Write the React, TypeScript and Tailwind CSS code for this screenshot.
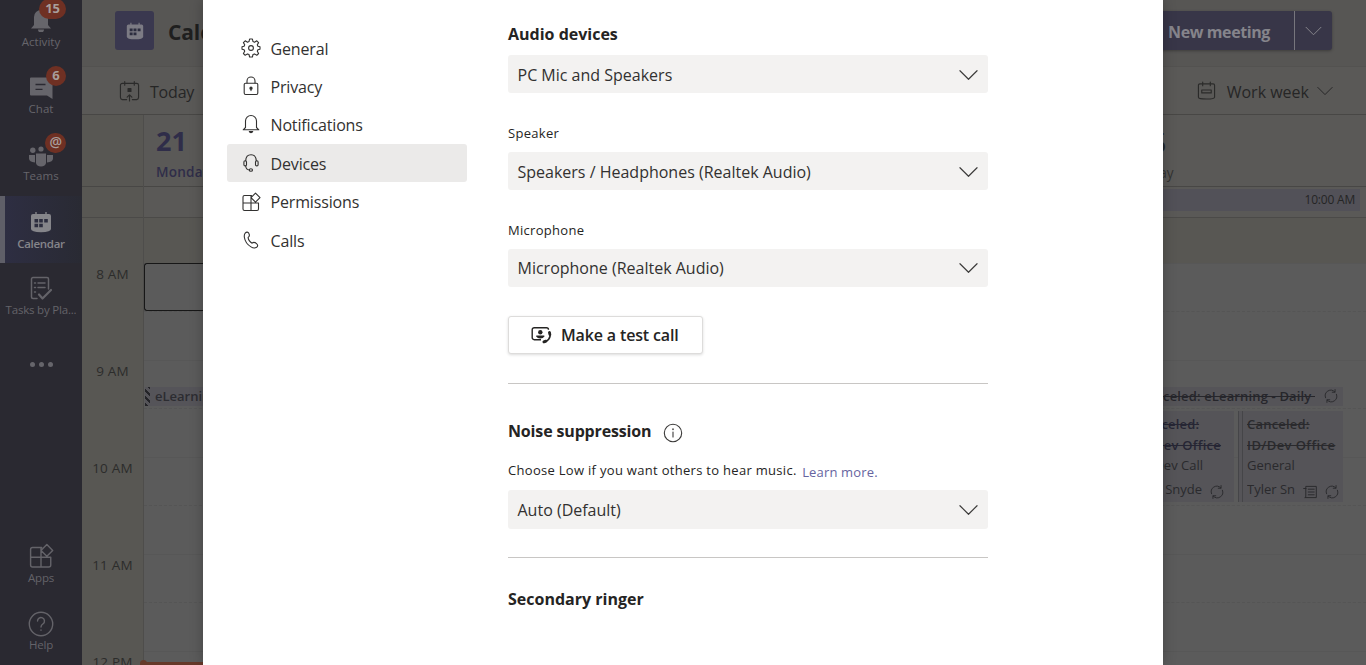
import type { ReactNode } from "react";

type IconProps = { className?: string; children?: ReactNode; box?: string; sw?: number };

function Line({ className = "", children, box = "0 0 20 20", sw = 1.1 }: IconProps) {
  return (
    <svg viewBox={box} className={className} fill="none" stroke="currentColor" strokeWidth={sw} strokeLinecap="round" strokeLinejoin="round">
      {children}
    </svg>
  );
}

const Chevron = ({ className = "" }: { className?: string }) => (
  <Line box="0 0 20 12" className={className} sw={1.2}>
    <path d="M1 1.5 10 10.5 19 1.5" />
  </Line>
);

const Gear = () => (
  <Line className="h-5 w-5">
    <circle cx="10" cy="10" r="2.4" />
    <path d="M8.6 1 H11.4 L12 3.6 L13.5 4.2 L15.8 2.8 L17.6 4.6 L16.3 6.8 L16.9 8.2 L19 8.7 V11.3 L16.9 11.8 L16.3 13.3 L17.6 15.5 L15.8 17.3 L13.5 15.9 L12 16.5 L11.4 19 H8.6 L8 16.5 L6.5 15.9 L4.2 17.3 L2.4 15.5 L3.7 13.3 L3.1 11.8 L1 11.3 V8.7 L3.1 8.2 L3.7 6.8 L2.4 4.6 L4.2 2.8 L6.5 4.2 L8 3.6 Z" />
  </Line>
);
const Lock = () => (
  <Line className="h-5 w-5">
    <rect x="3.2" y="7.2" width="13.6" height="11.3" rx="1.4" />
    <path d="M6 7V5a4 4 0 0 1 8 0v2M10 12.6v2" />
    <circle cx="10" cy="12.2" r="1.1" fill="currentColor" />
  </Line>
);
const Bell = () => (
  <Line className="-mt-px h-5 w-5">
    <path d="M4.500 13.500V7a5.500 5.500 0 0 1 11 0v6.500l2.300 2.300H2.200zM8.300 17.600a1.800 1.500 0 0 0 3.400 0z" />
  </Line>
);
const Headset = () => (
  <Line className="h-5 w-5">
    <path d="M4.700 7.700C4.900 4 7 1.800 10 1.800s5.100 2.200 5.300 5.900M4.700 13c.2 2.400 1.300 3.800 3.700 4" />
    <rect x="2.900" y="7.700" width="2.600" height="5.200" rx="1.200" />
    <rect x="14.500" y="7.700" width="2.600" height="5.200" rx="1.200" />
    <ellipse cx="9.900" cy="17" rx="1.600" ry="1.300" />
  </Line>
);
const AppsIcon = ({ className = "h-5 w-5" }: { className?: string }) => (
  <Line className={className}>
    <path d="M10.500 3.500H3.500A1.500 1.500 0 0 0 2 5v12a1.500 1.500 0 0 0 1.500 1.500H16a1.500 1.500 0 0 0 1.500-1.500v-6H2M10 3.500v15M14.500 1.200 19 5.700l-4.500 4.500L10 5.700z" />
  </Line>
);
const Phone = () => (
  <Line className="h-5 w-5">
    <path d="M4.200 3.100C5.500 1.700 7.100 1.900 7.800 3.300c.8 1.500 1.100 3-.7 4.100 .2 2.200 1.800 4.600 4 5.800 1.500-1.300 3-.8 4.400.4 1.600 1.400 1.500 2.700.1 3.700-1.500 1-3.600.9-5.600-.4C6.600 14.800 4 11.300 3.400 7.500 3.100 5.700 3.300 4.100 4.200 3.100z" />
  </Line>
);
const Recur = ({ className = "" }: { className?: string }) => (
  <Line className={`h-[14px] w-[14px] shrink-0 text-[#2b2b2e] ${className}`} sw={1.4}>
    <path d="M2.200 12.500A8 8 0 0 1 15.500 4.200M17.800 7.500A8 8 0 0 1 4.500 15.800M15.800.8v3.800h-4M4.200 19.200v-3.800h4" />
  </Line>
);

const CalSolid = ({ className = "" }: { className?: string }) => (
  <svg viewBox="0 0 22 22" className={className}>
    <path d="M6 1v3M16 1v3" stroke="currentColor" strokeWidth="1.400" />
    <path d="M1 5a2 2 0 0 1 2-2h16a2 2 0 0 1 2 2v13q0 3-10 3.200Q1 21 1 18z" fill="currentColor" />
    <g className="fill-[#2c2d3f]">
      <path d="M9.200 8h3.600v3.400H9.200zM14.200 8h3.600v3.400h-3.600zM4.500 8h3.600v3.400H4.500zM4.500 12.800h3.600v3.400H4.500zM9.200 12.800h3.600v3.400H9.200z" />
    </g>
  </svg>
);

function RailItem({ label, icon, badge, active, dim }: { label: string; icon: ReactNode; badge?: string; active?: boolean; dim?: boolean }) {
  return (
    <div className={`relative flex h-[67px] w-full shrink-0 flex-col items-center pt-[13px] ${active ? "bg-gradient-to-r from-[#2e2e43] to-[#292a33] text-[#85858a]" : dim ? "text-[#646369]" : "text-[#66656b]"}`}>
      {active && <span className="absolute inset-y-0 left-0 w-[5px] bg-[#5f5f68]" />}
      <div className="flex h-[26px] items-center justify-center">{icon}</div>
      <div className={`whitespace-nowrap text-[11.500px] leading-[15px] ${active ? "mt-px font-semibold tracking-[-0.300px]" : dim ? "tracking-[-0.200px]" : "tracking-[0.050px]"}`}>{label}</div>
      {badge && (
        <span className="absolute right-[16px] top-[4px] flex h-[20px] min-w-[20px] items-center justify-center rounded-full bg-[#6f3023] px-[4px] text-[13px] font-bold text-[#a89e9b]">
          {badge === "@" ? <span className="-mt-[3px] text-[14px] font-semibold">@</span> : <span className={badge.length > 1 ? "px-[2px]" : ""}>{badge}</span>}
        </span>
      )}
    </div>
  );
}

function Rail() {
  return (
    <nav className="flex h-full w-[82px] shrink-0 flex-col bg-[#2a2931]">
      <div className="-mt-[5px] flex flex-col">
        <RailItem
          label="Activity"
          badge="15"
          icon={
            <svg viewBox="0 0 22 24" className="-mt-[3px] h-6 w-[22px]" fill="currentColor">
              <path d="M4 17V9a7 7 0 0 1 14 0v8l3 3.500H1zM8 21.500h6a3 3 0 0 1-6 0z" />
            </svg>
          }
        />
        <RailItem
          label="Chat"
          badge="6"
          icon={
            <svg viewBox="0 0 24 24" className="h-6 w-6">
              <path d="M1 2.500a1 1 0 0 1 1-1h20.500a1 1 0 0 1 1 1V23L18 19.500H2a1 1 0 0 1-1-1z" fill="currentColor" />
              <path d="M6.500 8.500h10M6.500 13.300h7" className="stroke-[#2a2931]" strokeWidth="1.300" />
            </svg>
          }
        />
        <RailItem
          label="Teams"
          badge="@"
          icon={
            <svg viewBox="0 0 24 24" className="mt-[2px] h-6 w-6" fill="currentColor">
              <circle cx="3.800" cy="6.300" r="2.700" />
              <circle cx="12" cy="5" r="2.600" />
              <path d="M7 9.500h10v9.500a5 3.500 0 0 1-10 0zM0 11h6v7.500q-6-.5-6-4zM18 11h6v3.500q0 3.500-6 4z" />
            </svg>
          }
        />
        <RailItem label="Calendar" active icon={<CalSolid className="h-[22px] w-[22px]" />} />
        <RailItem
          label="Tasks by Pla..."
          dim
          icon={
            <Line box="0 0 22 24" className="-mt-[2px] h-6 w-[22px]" sw={1.500}>
              <path d="M7 22.500H3A1.500 1.500 0 0 1 1.500 21V3A1.500 1.500 0 0 1 3 1.500h14A1.500 1.500 0 0 1 18.500 3v10M4.500 7h1M8 7h7M4.500 11.500h1M8 11.500h7M4.500 16h1" />
              <path d="m9 18.500 3.500 4 8.500-8.500" strokeWidth="2.200" />
            </Line>
          }
        />
      </div>
      <div className="mt-[32px] flex justify-center gap-[4px]">
        <span className="h-[5px] w-[5px] rounded-full bg-[#66656b]" />
        <span className="h-[5px] w-[5px] rounded-full bg-[#66656b]" />
        <span className="h-[5px] w-[5px] rounded-full bg-[#66656b]" />
      </div>
      <div className="mt-auto flex flex-col">
        <RailItem dim label="Apps" icon={<AppsIcon className="-mt-[2px] h-[26px] w-[26px]" />} />
        <RailItem
          dim
          label="Help"
          icon={
            <Line box="0 0 24 24" className="-mt-px h-[26px] w-[26px]" sw={1.300}>
              <circle cx="12" cy="12" r="10.800" />
              <path d="M8.800 9.300a3.200 3.200 0 1 1 5.200 2.400c-1.300 1-2 1.500-2 3M12 17.500v.3" />
            </Line>
          }
        />
      </div>
    </nav>
  );
}

function TopBar() {
  return (
    <header className="flex h-[67px] shrink-0 items-start border-b border-[#535250] bg-[#575654] pl-[33px] pr-[34px] pt-[11px]">
      <div className="flex h-[39px] w-[39px] items-center justify-center rounded-[3px] bg-[#3a384f] text-[#7c7b84]">
        <CalSolid className="h-[18px] w-[18px]" />
      </div>
      <h1 className="ml-[14px] text-[21px] font-bold leading-[42px] tracking-[-0.100px] text-[#1f1f1f]">Calendar</h1>
      <div className="ml-auto flex h-[39px] rounded-[3px] bg-[#383648] text-[#85848b] shadow-[0_1px_3px_rgba(0,0,0,0.3)]">
        <div className="w-[150px] pr-[24px] text-right text-[16px] font-bold leading-[42px] tracking-[-0.400px]">New meeting</div>
        <div className="flex w-[38px] items-center justify-center border-l border-[#77767d]">
          <Chevron className="h-[10px] w-[17px]" />
        </div>
      </div>
    </header>
  );
}

function Toolbar() {
  return (
    <div className="flex h-[48px] shrink-0 items-center border-b border-[#484745] bg-[#5a5957] pl-[37px] pr-[33px] text-[#262626]">
      <Line box="0 0 22 22" className="h-[22px] w-[21px] text-[#2b2b2a]" sw={1.200}>
        <path d="M8 20H3.500A2.500 2.500 0 0 1 1.500 17.500V5a2 2 0 0 1 2-2h15a2 2 0 0 1 2 2v12.500a2.500 2.500 0 0 1-2 2.500H14M6 1v4M16 1v4M11 21.500v-6M8.500 17.500l2.500-2.500 2.500 2.500" />
        <path d="M9.500 8.500h3v3h-3z" fill="currentColor" />
      </Line>
      <span className="ml-[10px] mt-[2px] text-[16px] tracking-[-0.200px]">Today</span>
      <Line box="0 0 20 20" className="ml-auto h-[19px] w-[19px] text-[#2b2b2a]" sw={1.200}>
        <path d="M1.500 4.500a1.500 1.500 0 0 1 1.500-1.500h14a1.500 1.500 0 0 1 1.500 1.500V17q0 2-8.500 2T1.500 17zM6 1v4M14 1v4M5 9.500h10v3H5z" />
      </Line>
      <span className="ml-[11px] mt-[2px] text-[16px]">Work week</span>
      <Chevron className="ml-[8px] h-[10px] w-[16px]" />
    </div>
  );
}

const HOURS = ["8 AM", "9 AM", "10 AM", "11 AM"];

function Slots({ selected }: { selected?: boolean }) {
  return (
    <>
      <div className="h-[45px] shrink-0 bg-[#585753]" />
      {HOURS.map((h, i) => (
        <div key={h} className="h-[97px] shrink-0">
          <div className={selected && i === 0 ? "h-[48px] rounded-l-[3px] border border-r-0 border-[#171717]" : "h-[48px] border-t border-[#575757]"} />
          <div className="h-[49px] border-t border-dashed border-[#555555]" />
        </div>
      ))}
      <div className="h-[20px] border-t border-[#575757]" />
    </>
  );
}

const EVENT = "bg-[#555458] text-[13px] text-[#2a2a2d]";

function FridayEvents() {
  return (
    <div className="absolute left-0 top-[169px] flex w-[222px] flex-col gap-[5px]">
      <div className={`flex h-[19px] items-center justify-end whitespace-nowrap pr-[5px] ${EVENT}`}>
        <span className="mr-[9px] mt-px font-semibold tracking-[0.150px] text-[#26262b] line-through">Canceled: eLearning - Daily&nbsp;</span>
        <Recur className="-mt-[2px]" />
      </div>
      <div className="flex h-[91px] justify-end gap-[4px] whitespace-nowrap">
        <div className={`flex w-[116px] flex-col pr-[10px] pt-[3px] ${EVENT}`}>
          <b className="pl-[16px] font-semibold leading-[21px] tracking-[0.150px] text-[#262634] line-through">Canceled:</b>
          <b className="self-end pr-[3px] font-semibold leading-[21px] tracking-[0.250px] text-[#262634] line-through">ID/Dev Office</b>
          <span className="self-end pr-[21px] leading-[19px]">ID/Dev Call</span>
          <div className="mt-[4px] flex items-center justify-end">
            <span className="flex w-[80px] justify-end overflow-hidden leading-[20px]">Tyler Snyde</span>
            <Recur className="ml-[8px] mt-[5px]" />
          </div>
        </div>
        <div className={`flex w-[108px] ${EVENT}`}>
          <span className="w-[5px] shrink-0 border-x border-[#454548]" />
          <div className="flex flex-col pl-[4px] pt-[3px]">
            <b className="font-semibold leading-[21px] tracking-[0.200px] line-through">Canceled:</b>
            <b className="font-semibold leading-[21px] tracking-[0.400px] line-through">ID/Dev Office</b>
            <span className="leading-[19px]">General</span>
            <div className="mt-[4px] flex items-center">
              <span className="w-[50px] overflow-hidden leading-[20px]">Tyler Sn</span>
              <Line className="ml-[6px] mt-[5px] h-[14px] w-[14px]" sw={1.400}>
                <path d="M4 5V2h15v16H2.500A2 2 0 0 0 4 16V5M1 5h3M7.500 6H16M7.500 10H16M7.500 14H16" />
              </Line>
              <Recur className="ml-[8px] mt-[5px]" />
            </div>
          </div>
        </div>
      </div>
    </div>
  );
}

function CalendarGrid() {
  return (
    <div className="flex min-h-0 flex-1 overflow-hidden bg-[#5a5957] text-[#252525]">
      <div className="w-[62px] shrink-0 border-r border-[#4e4d4b] bg-[#585753]">
        <div className="h-[72px] border-b border-[#484745]" />
        <div className="h-[31px] border-b border-[#4b4a48]" />
        <div className="flex flex-col pt-[45px]">
          {[...HOURS, "12 PM"].map((h) => (
            <div key={h} className="h-[97px] text-center text-[13.500px] leading-[22px] tracking-[0.200px] text-[#2c2c2b]">{h}</div>
          ))}
        </div>
      </div>
      <div className="relative flex w-[977px] shrink-0 flex-col bg-[#5b5b5b]">
        <div className="h-[72px] shrink-0 border-b border-[#484745] bg-[#5a5957] pl-[12px] text-[#2f2d49]">
          <div className="pt-[7px] text-[27px] font-bold leading-[38px]">21</div>
          <div className="mt-px text-[13.600px] font-semibold leading-[22px] tracking-[0.200px]">Monday</div>
        </div>
        <div className="h-[31px] shrink-0 border-b border-[#4b4a48] bg-[#5a5957]" />
        <Slots selected />
        <div className="absolute left-[1px] top-[272px] flex h-[19px] w-[240px] items-center gap-[5px] bg-[#555459] text-[13px] font-semibold text-[#2c2c31]">
          <span className="h-full w-[5px] bg-[repeating-linear-gradient(45deg,#242428_0px,#242428_2.500px,transparent_2.500px,transparent_5px)]" />
          <span className="mt-px">eLearning</span>
        </div>
        <div className="absolute -left-[4px] bottom-0 flex w-[240px] items-end">
          <span className="-mr-[3px] h-[5px] w-[7px] rounded-t-full bg-[#66392a]" />
          <span className="h-[3px] flex-1 bg-[#66392a]" />
        </div>
      </div>
      <div className="relative flex flex-1 flex-col bg-[#5b5b5b]">
        <div className="h-[72px] shrink-0 border-b border-[#484745] bg-[#5a5957] pl-[14px]">
          <div className="pt-[9px] text-[27.500px] leading-[38px]">25</div>
          <div className="mt-px text-[13.600px] leading-[20px] text-[#333332]">Friday</div>
        </div>
        <div className="h-[31px] shrink-0 border-b border-[#4b4a48] bg-[#5a5957] pr-[6px] pt-[2px]">
          <div className="h-[22px] bg-[#525158] pr-[5px] text-right text-[12px] leading-[21px] tracking-[-0.200px]">10:00 AM</div>
        </div>
        <div className="relative">
          <Slots />
          <FridayEvents />
        </div>
      </div>
    </div>
  );
}

const NAV: { label: string; icon: ReactNode; active?: boolean }[] = [
  { label: "General", icon: <Gear /> },
  { label: "Privacy", icon: <Lock /> },
  { label: "Notifications", icon: <Bell /> },
  { label: "Devices", icon: <Headset />, active: true },
  { label: "Permissions", icon: <AppsIcon /> },
  { label: "Calls", icon: <Phone /> },
];

function Select({ value }: { value: string }) {
  return (
    <div className="flex h-[38.200px] w-full items-center justify-between rounded-[3px] bg-[#f3f2f1] pl-[9.500px] pr-[10px] pt-px text-[16px] text-[#323130]">
      <span>{value}</span>
      <Chevron className="h-[12px] w-[19px] text-[#3b3a39]" />
    </div>
  );
}

function SettingsDialog() {
  return (
    <div role="dialog" className="absolute inset-y-0 left-[203px] flex w-[960px] bg-white text-[#252423] shadow-[0_0_12px_rgba(0,0,0,0.25)]">
      <aside className="ml-[24px] mt-[29px] flex w-[240px] flex-col">
        {NAV.map((n) => (
          <div key={n.label} className={`mb-[0.450px] flex h-[38px] shrink-0 items-center rounded-[3px] pl-[14px] text-[16px] text-[#323130] ${n.active ? "bg-[#ebeae9]" : ""}`}>
            {n.icon}
            <span className="ml-[9.500px] mt-px tracking-[-0.150px]">{n.label}</span>
          </div>
        ))}
      </aside>
      <section className="ml-[41px] flex w-[480px] flex-col">
        <h2 className="mt-[22px] text-[16px] font-bold leading-[24px]">Audio devices</h2>
        <div className="mt-[9.100px]"><Select value="PC Mic and Speakers" /></div>
        <label className="mt-[29.700px] text-[13px] leading-[20px] tracking-[0.300px]">Speaker</label>
        <div className="mt-[9px]"><Select value="Speakers / Headphones (Realtek Audio)" /></div>
        <label className="mt-[29.700px] text-[13px] leading-[20px] tracking-[0.300px]">Microphone</label>
        <div className="mt-[9px]"><Select value="Microphone (Realtek Audio)" /></div>
        <button className="mt-[28.900px] flex h-[38px] w-[195px] items-center rounded-[3px] border border-[#dddcdb] bg-white pl-[22px] text-[16px] font-semibold tracking-[-0.150px] shadow-[0_1px_3px_rgba(0,0,0,0.14)]">
          <svg viewBox="0 0 21 18" className="mt-px h-[18px] w-[21px]" fill="none" stroke="currentColor">
            <path d="M10 13.700H3.200a2 2 0 0 1-2-2V3.700a2 2 0 0 1 2-2h12.300a2 2 0 0 1 2 2" strokeWidth="1.400" />
            <circle cx="9.300" cy="6.200" r="2.200" fill="currentColor" stroke="none" />
            <path d="M5.300 9.600h8v.8q-1 2-4 2t-4-2z" fill="currentColor" stroke="none" />
            <path d="M18.800 6.500c.8 2.700.4 4.700-1.100 6.700-1.300 1.700-2.900 2.600-4.900 2.900" strokeWidth="1.600" strokeLinecap="round" />
            <path d="M18.400 6.500 18.900 8.500M12.900 15.900l2-.8" strokeWidth="2.800" strokeLinecap="round" />
          </svg>
          <span className="ml-[9px]">Make a test call</span>
        </button>
        <hr className="mt-[29px] border-[#c8c6c4]" />
        <div className="mt-[35px] flex h-[24px] items-center">
          <h2 className="text-[16px] font-bold tracking-[-0.150px]">Noise suppression</h2>
          <Line className="ml-[12px] mt-[5px] h-[20px] w-[20px] text-[#3b3a39]">
            <circle cx="10" cy="10" r="8.700" />
            <path d="M10 9v5" />
            <path d="M10 6v.4" strokeWidth="1.500" />
          </Line>
        </div>
        <p className="mt-[17px] flex h-[20px] text-[13px] leading-[20px] tracking-[0.300px]">
          Choose Low if you want others to hear music.
          <a className="ml-[5.500px] mt-[2px] tracking-[0.150px] text-[#6664a0]">Learn more.</a>
        </p>
        <div className="mt-[10.400px]"><Select value="Auto (Default)" /></div>
        <hr className="mt-[28.400px] border-[#c8c6c4]" />
        <h2 className="mt-[29px] text-[16px] font-bold leading-[24px]">Secondary ringer</h2>
      </section>
    </div>
  );
}

export default function App() {
  return (
    <div className="relative flex h-[665px] w-[1366px] overflow-hidden bg-[#5b5b5b] font-['Open_Sans','Noto_Sans',sans-serif]">
      <Rail />
      <main className="flex min-w-0 flex-1 flex-col">
        <TopBar />
        <Toolbar />
        <CalendarGrid />
      </main>
      <SettingsDialog />
    </div>
  );
}
